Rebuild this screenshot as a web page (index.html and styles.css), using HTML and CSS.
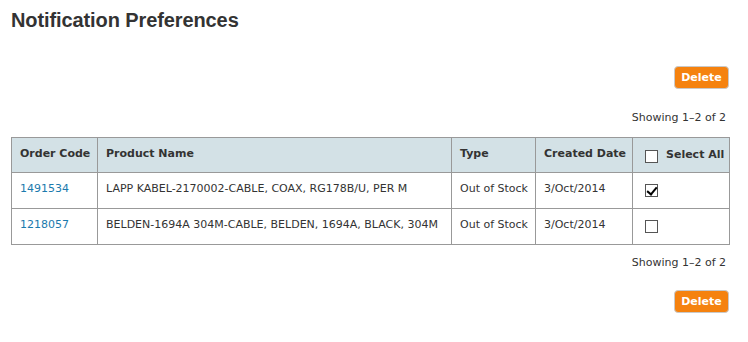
FILE: index.html
```html
<!DOCTYPE html>
<html>
<head>
  <meta charset="UTF-8">
  <link rel="stylesheet" href="styles.css">
</head>
<body>
  <div class="page">
    <h1 class="page-title">Notification Preferences</h1>

    <div class="actions">
      <button class="btn-delete">Delete</button>
    </div>
    <div class="paging">Showing 1&ndash;2 of 2</div>

    <table class="prefs">
      <thead>
        <tr>
          <th class="col-code">Order Code</th>
          <th class="col-name">Product Name</th>
          <th class="col-type">Type</th>
          <th class="col-date">Created Date</th>
          <th class="col-select"><label><input type="checkbox"> Select All</label></th>
        </tr>
      </thead>
      <tbody>
        <tr>
          <td><a href="#">1491534</a></td>
          <td>LAPP KABEL-2170002-CABLE, COAX, RG178B/U, PER M</td>
          <td>Out of Stock</td>
          <td>3/Oct/2014</td>
          <td><input type="checkbox" checked></td>
        </tr>
        <tr>
          <td><a href="#">1218057</a></td>
          <td>BELDEN-1694A 304M-CABLE, BELDEN, 1694A, BLACK, 304M</td>
          <td>Out of Stock</td>
          <td>3/Oct/2014</td>
          <td><input type="checkbox"></td>
        </tr>
      </tbody>
    </table>

    <div class="paging bottom">Showing 1&ndash;2 of 2</div>
    <div class="actions">
      <button class="btn-delete">Delete</button>
    </div>
  </div>
</body>
</html>
```

FILE: styles.css
```css
body {
  margin: 0;
  background: #fff;
  color: #333;
  font-family: "DejaVu Sans", Verdana, sans-serif;
  font-size: 11px;
}

.page {
  width: 719px;
  padding: 0 11px;
}

.page-title {
  margin: 0;
  padding-top: 9px;
  height: 66px;
  box-sizing: border-box;
  font-family: "Liberation Sans", Arial, sans-serif;
  font-size: 20px;
  font-weight: bold;
  line-height: 23px;
  letter-spacing: -0.1px;
  color: #333;
}

.actions {
  display: flex;
  justify-content: flex-end;
  padding-right: 1px;
}

.btn-delete {
  background: #f5820f;
  color: #fff;
  font-family: "DejaVu Sans", Verdana, sans-serif;
  font-size: 11px;
  font-weight: bold;
  border: 1px solid #c9c9c9;
  border-radius: 4px;
  height: 23px;
  width: 55px;
  padding: 0;
  cursor: pointer;
}

.paging {
  text-align: right;
  padding-right: 4px;
  margin-top: 21px;
  height: 27px;
  line-height: 16px;
  white-space: nowrap;
}

.paging.bottom {
  margin-top: 10px;
  height: 35px;
}

.prefs {
  width: 719px;
  table-layout: fixed;
  border-collapse: collapse;
  border: 1px solid #999;
}

.prefs th,
.prefs td {
  border: 1px solid #999;
  text-align: left;
  vertical-align: top;
  padding: 9px 8px 0;
  line-height: 14px;
  white-space: nowrap;
}

.prefs thead tr {
  height: 35px;
}

.prefs tbody tr {
  height: 36px;
}

.prefs th {
  background: #d3e1e6;
  font-weight: bold;
}

.col-code { width: 69px; }
.col-name { width: 337px; }
.col-type { width: 67px; }
.col-date { width: 80px; }

.prefs a {
  color: #1b7aad;
  text-decoration: none;
}

.col-select label {
  display: flex;
  align-items: center;
  gap: 8px;
  padding-left: 4px;
}

.prefs input[type="checkbox"] {
  appearance: none;
  -webkit-appearance: none;
  flex-shrink: 0;
  width: 13px;
  height: 13px;
  margin: 0;
  border: 1px solid #555;
  background: #fff;
  position: relative;
  vertical-align: top;
}

.col-select input[type="checkbox"] {
  margin-top: 3px;
}

.prefs td input[type="checkbox"] {
  margin: 2px 0 0 4px;
}

.prefs input[type="checkbox"]:checked::after {
  content: "";
  position: absolute;
  left: 3px;
  top: 0px;
  width: 4px;
  height: 8px;
  border: solid #000;
  border-width: 0 2px 2px 0;
  transform: rotate(40deg);
}
```
